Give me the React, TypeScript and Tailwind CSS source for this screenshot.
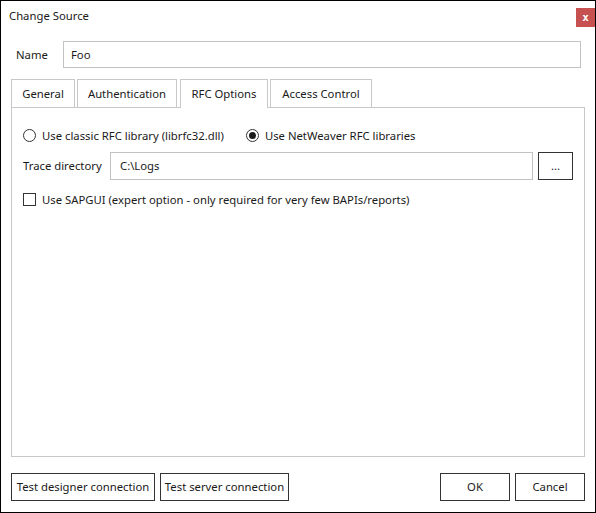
import React from "react";

function Radio({ checked }: { checked?: boolean }) {
  return (
    <span className="w-[13px] h-[13px] rounded-full border border-[#333333] bg-white flex items-center justify-center shrink-0">
      {checked && <span className="w-[7px] h-[7px] rounded-full bg-[#1a1a1a]" />}
    </span>
  );
}

function Btn({ children, w }: { children: React.ReactNode; w: string }) {
  return (
    <div className={`${w} h-[28px] border border-[#333333] bg-white flex items-center justify-center text-[#1a1a1a]`}>
      {children}
    </div>
  );
}

export default function App() {
  const font = { fontFamily: '"Noto Sans", "Open Sans", sans-serif' };
  return (
    <div
      className="w-[596px] h-[513px] border border-black bg-white flex flex-col text-[11.3px] text-[#1a1a1a] leading-none"
      style={font}
    >
      {/* title bar */}
      <div className="h-[40px] flex items-start justify-between">
        <div className="pl-[8px] pt-[9px]">Change Source</div>
        <div className="mt-[7px] w-[19px] h-[19px] bg-[#c75050] text-white font-bold text-[11px] flex items-center justify-center" style={{ fontFamily: '"DejaVu Sans Mono", monospace' }}>
          x
        </div>
      </div>

      {/* name row */}
      <div className="flex items-center pl-[15px] pr-[14px]">
        <div className="w-[47px]">Name</div>
        <div className="flex-1 h-[27px] border border-[#c3c3c3] flex items-center pl-[7px]">Foo</div>
      </div>

      {/* tabs */}
      <div className="flex items-end pl-[10px] mt-[11px] relative z-10">
        <div className="w-[64px] h-[28px] border border-[#c8c8c8] border-b-0 flex items-center justify-center">General</div>
        <div className="w-[100px] h-[28px] ml-[2px] border border-[#c8c8c8] border-b-0 flex items-center justify-center">Authentication</div>
        <div className="w-[88px] ml-[3px] border border-[#c8c8c8] border-b-0 bg-white -mb-px h-[29px] flex items-center justify-center pb-px">RFC Options</div>
        <div className="w-[102px] h-[28px] ml-[2px] border border-[#c8c8c8] border-b-0 flex items-center justify-center">Access Control</div>
      </div>

      {/* panel */}
      <div className="flex-1 mx-[10px] border border-[#c8c8c8] flex flex-col px-[11px] pt-[21px]">
        <div className="flex items-center h-[13px]">
          <Radio />
          <span className="ml-[6px]">Use classic RFC library (librfc32.dll)</span>
          <span className="ml-[22px]"><Radio checked /></span>
          <span className="ml-[6px]">Use NetWeaver RFC libraries</span>
        </div>
        <div className="flex items-center mt-[10px]">
          <div className="w-[87px]">Trace directory</div>
          <div className="flex-1 h-[28px] border border-[#c3c3c3] flex items-center pl-[9px]">C:\Logs</div>
          <div className="ml-[5px] w-[35px] h-[28px] border border-[#333333] flex items-center justify-center">...</div>
        </div>
        <div className="flex items-center mt-[13px]">
          <span className="w-[13px] h-[13px] border border-[#333333] bg-white shrink-0" />
          <span className="ml-[6px]">Use SAPGUI (expert option - only required for very few BAPIs/reports)</span>
        </div>
      </div>

      {/* bottom buttons */}
      <div className="flex items-center px-[10px] mt-[16px] mb-[11px]">
        <Btn w="w-[144px]">Test designer connection</Btn>
        <div className="ml-[5px]"><Btn w="w-[129px]">Test server connection</Btn></div>
        <div className="flex-1" />
        <Btn w="w-[70px]">OK</Btn>
        <div className="ml-[5px]"><Btn w="w-[70px]">Cancel</Btn></div>
      </div>
    </div>
  );
}
